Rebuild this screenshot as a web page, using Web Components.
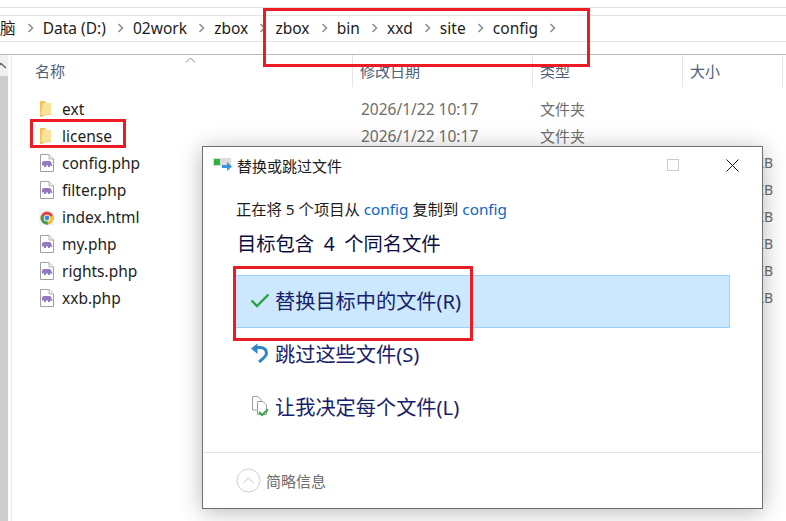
<!DOCTYPE html>
<html>
<title>replace files</title>
<style>
html,body { margin:0; padding:0; background:#fff; }
body { width:786px; height:521px; overflow:hidden; position:relative;
  font-family:"Noto Sans","Noto Sans CJK SC",sans-serif; }
</style>
<body>
<path-bar></path-bar>
<div style="display:flex">
  <side-strip></side-strip>
  <file-list>
    <file-row kind="folder" name="ext" date="2026/1/22 10:17" type="文件夹"></file-row>
    <file-row kind="folder" name="license" date="2026/1/22 10:17" type="文件夹"></file-row>
    <file-row kind="php" name="config.php" size="KB"></file-row>
    <file-row kind="php" name="filter.php" size="KB"></file-row>
    <file-row kind="chrome" name="index.html" size="KB"></file-row>
    <file-row kind="php" name="my.php" size="KB"></file-row>
    <file-row kind="php" name="rights.php" size="KB"></file-row>
    <file-row kind="php" name="xxb.php" size="KB"></file-row>
  </file-list>
</div>
<replace-dialog>
  <dialog-option icon="check" active>替换目标中的文件(R)</dialog-option>
  <dialog-option icon="skip">跳过这些文件(S)</dialog-option>
  <dialog-option icon="decide">让我决定每个文件(L)</dialog-option>
</replace-dialog>
<red-box style="left:263px;top:8px;width:327px;height:59px"></red-box>
<red-box style="left:30px;top:119px;width:96px;height:29px"></red-box>
<red-box style="left:233px;top:266px;width:240px;height:75px"></red-box>
<script>
class PathBar extends HTMLElement {
  constructor() { super()
    let crumbs = ['脑','Data (D:)','02work','zbox','zbox','bin','xxd','site','config']
    let chev = `<svg width="7" height="10" viewBox="0 0 7 10"><path d="M1.5 1 L5.5 5 L1.5 9" fill="none" stroke="#8f8f8f" stroke-width="1.6"/></svg>`
    this.attachShadow({mode:'open'}).innerHTML = `
<style>
:host { display:block; height:55px; box-sizing:border-box; padding-top:7px; border-bottom:1px solid #b9b9b9; }
.top { height:7px; border-top:1px solid #e3e3e3; border-bottom:1px solid #e3e3e3; }
.bar { height:26px; box-sizing:border-box; padding-bottom:2px; border-bottom:1px solid #e3e3e3; display:flex; align-items:center;
  font-size:15.5px; color:#1c1c1c; white-space:nowrap; }
span { margin-right:11px; }
svg { flex:none; margin-right:9.2px; }
</style>
<div class="top"></div>
<div class="bar">${crumbs.map(c=>`<span>${c}</span>${chev}`).join('')}</div>`
  }
}
customElements.define('path-bar',PathBar)

class SideStrip extends HTMLElement {
  constructor() { super()
    this.attachShadow({mode:'open'}).innerHTML = `
<style>
:host { display:flex; flex-direction:column; width:8px; height:466px; background:#f0f0f0; flex:none; margin-right:3px; }
.arrow { height:21px; flex:none; }
.thumb { flex:1; background:#cdcdcd; }
</style>
<div class="arrow"><svg width="8" height="21"><path d="M-3 13 L1 8.5 L6 13" fill="none" stroke="#606060" stroke-width="1.4"/></svg></div>
<div class="thumb"></div>`
  }
}
customElements.define('side-strip',SideStrip)

class FileList extends HTMLElement {
  constructor() { super()
    this.attachShadow({mode:'open'}).innerHTML = `
<style>
:host { display:block; flex:1; height:466px; border-left:1px solid #ececec; position:relative; }
.head { display:grid; grid-template-columns:341px 180px 150px 100px; height:32px; font-size:15px; color:#4c607a; }
.head div { padding-left:7px; padding-top:6px; border-right:1px solid #e5e5e5; line-height:20px; height:20px; padding-bottom:6px; }
.head div:first-child { padding-left:23px; }
.caret { position:absolute; left:173px; top:2px; }
.rows { padding-top:8px; }
</style>
<div class="head"><div>名称</div><div>修改日期</div><div>类型</div><div>大小</div></div>
<svg class="caret" width="11" height="6"><path d="M1 5.5 L5.5 1 L10 5.5" fill="none" stroke="#8a8a8a" stroke-width="1"/></svg>
<div class="rows"><slot></slot></div>`
  }
}
customElements.define('file-list',FileList)

const fileIcons = {
  folder:`<svg width="16" height="18" viewBox="1 0 16 18"><path d="M2 1 H7 L8 3 V15 L3 17 H2 Z" fill="#f0c65a"/><path d="M5 3 H13 V15 H3 Z" fill="#fbe29a"/><path d="M3 16.5 L8 14.5 H13 V15 H8 L3 17Z" fill="#e6bd58"/></svg>`,
  php:`<svg width="16" height="18" viewBox="0 0 16 18"><path d="M1.5 .5 H10 L14.5 5 V17.5 H1.5 Z" fill="#fff" stroke="#a0a0a0"/><path d="M10 .5 V5 H14.5" fill="#eee" stroke="#b5b5b5"/><path d="M3 12 V9 Q3 7 5 7 H10 Q12.5 7 12.5 9.5 L13.5 12 H12 L11 11 V13 H9 V11.5 H7 V13 H5 V11.5 L4 11 Z" fill="#9478bd"/></svg>`,
  chrome:`<svg width="16" height="18" viewBox="0 0 16 18"><path d="M0 .5 H11 L15.5 5 V17.5 H0 Z" fill="#f4f4f4"/><circle cx="8" cy="10" r="6.5" fill="#e0473a"/><path d="M8 10 L14 7.5 A6.5 6.5 0 0 1 9 16.4 L5 14 Z" fill="#f2c230"/><path d="M8 10 L2.4 13.2 A6.5 6.5 0 0 1 2.3 7 Z" fill="#3da55a"/><path d="M8 10 L2.4 13 A6.5 6.5 0 0 0 9 16.4 Z" fill="#3da55a"/><circle cx="8" cy="10" r="3.2" fill="#fff"/><circle cx="8" cy="10" r="2.4" fill="#4a86e0"/></svg>`
}
class FileRow extends HTMLElement {
  constructor() { super()
    let a = n => this.getAttribute(n) || ''
    this.attachShadow({mode:'open'}).innerHTML = `
<style>
:host { display:grid; grid-template-columns:341px 180px 150px 90px; height:27px; align-items:center; font-size:15.5px; color:#1e1e1e; }
.n { display:flex; align-items:center; padding-left:27px; gap:7px; }
svg { flex:none; }
.d { padding-left:8px; color:#6d6d6d; font-size:15.5px; }
.t { padding-left:7px; color:#6d6d6d; font-size:15px; }
.s { color:#6d6d6d; font-size:14px; text-align:right; }
</style>
<div class="n">${fileIcons[a('kind')]}<span>${a('name')}</span></div>
<div class="d">${a('date')}</div><div class="t">${a('type')}</div><div class="s">${a('size')}</div>`
  }
}
customElements.define('file-row',FileRow)

class ReplaceDialog extends HTMLElement {
  constructor() { super()
    this.attachShadow({mode:'open'}).innerHTML = `
<style>
:host { display:flex; flex-direction:column; position:absolute; left:202px; top:146px; width:561px; height:363px; box-sizing:border-box;
  background:#fff; border:1px solid #707070; box-shadow:0 3px 22px rgba(0,0,0,.28); }
.title { display:flex; align-items:center; height:36px; flex:none; padding-left:10px; font-size:15px; color:#1c1c1c; }
.title svg.logo { margin-right:0; }
.title span { flex:1; }
.max { width:12px; height:12px; border:1px solid #cccccc; box-sizing:border-box; margin-right:47px; }
.close { margin-right:23px; }
.body { flex:1; padding:16px 32px 0 32px; }
.line { font-size:15.3px; color:#1c1c1c; line-height:20px; height:20px; margin-left:1px; }
.line a { color:#0a66c8; }
h2 { margin:11px 0 18px 2px; font-weight:400; font-size:19.3px; word-spacing:4.5px; line-height:27px; color:#0c0c3c; }
.foot { height:55px; flex:none; border-top:1px solid #e3e3e3; display:flex; align-items:center; gap:5px; padding-left:33px; font-size:15px; color:#6d6d6d; }
</style>
<div class="title">
  <svg class="logo" width="24" height="16" viewBox="0 0 24 16"><rect x="0" y="1" width="18" height="8" fill="#dcdcdc"/><rect x="1" y="2" width="6" height="6" fill="#2fb33a"/><path d="M9 8 H14 V5 L19 9.5 L14 14 V11 H9 Z" fill="#3c95e0"/></svg>
  <span>替换或跳过文件</span>
  <div class="max"></div>
  <svg class="close" width="13" height="13" viewBox="0 0 13 13"><path d="M.5 .5 L12.5 12.5 M12.5 .5 L.5 12.5" stroke="#111" stroke-width="1"/></svg>
</div>
<div class="body">
  <div class="line">正在将 5 个项目从 <a>config</a> 复制到 <a>config</a></div>
  <h2>目标包含 4 个同名文件</h2>
  <slot></slot>
</div>
<div class="foot">
  <svg width="25" height="25" viewBox="0 0 25 25"><circle cx="12.5" cy="12.5" r="11.5" fill="#fff" stroke="#cfcfcf"/><path d="M7.5 15 L12.5 10 L17.5 15" fill="none" stroke="#c4c4c4" stroke-width="1"/></svg>
  <span>简略信息</span>
</div>`
  }
}
customElements.define('replace-dialog',ReplaceDialog)

const optIcons = {
  check:`<svg width="20" height="16" viewBox="0 0 20 16"><path d="M1.5 8.5 L7 14 L18.5 2.5" fill="none" stroke="#2ea043" stroke-width="2.4"/></svg>`,
  skip:`<svg width="20" height="20" viewBox="0 0 20 20"><path d="M7.5 .5 V11 L1 5.5 Z" fill="#2f86c9"/><path d="M6 4.5 H10 Q16.5 4.5 16.5 10.5 Q16.5 13 9 19" fill="none" stroke="#2f86c9" stroke-width="3"/></svg>`,
  decide:`<svg width="20" height="22" viewBox="0 0 20 22"><path d="M2.5 1.5 H8 L11 4.5 V15 H2.5 Z" fill="#fff" stroke="#a0a0a0"/><path d="M7.5 6.5 H13 L16.5 10 V19.5 H7.5 Z" fill="#fff" stroke="#a0a0a0"/><path d="M9 17 L12 20 L18 14.5" fill="none" stroke="#35a845" stroke-width="2"/></svg>`
}
class DialogOption extends HTMLElement {
  constructor() { super()
    this.attachShadow({mode:'open'}).innerHTML = `
<style>
:host { display:flex; align-items:center; gap:5px; height:53px; box-sizing:border-box; padding:0 0 3px 14px; border:1px solid transparent; font-size:20.2px; color:#17206a; }
:host([active]) { background:#cce8ff; border-color:#99d1ff; }
svg { flex:none; }
</style>
${optIcons[this.getAttribute('icon')]}<slot></slot>`
  }
}
customElements.define('dialog-option',DialogOption)

class RedBox extends HTMLElement {
  constructor() { super()
    this.attachShadow({mode:'open'}).innerHTML = `
<style>
:host { display:block; position:absolute; box-sizing:border-box; border:3px solid #ed1c24; pointer-events:none; }
</style>`
  }
}
customElements.define('red-box',RedBox)
</script>
</body>
</html>
